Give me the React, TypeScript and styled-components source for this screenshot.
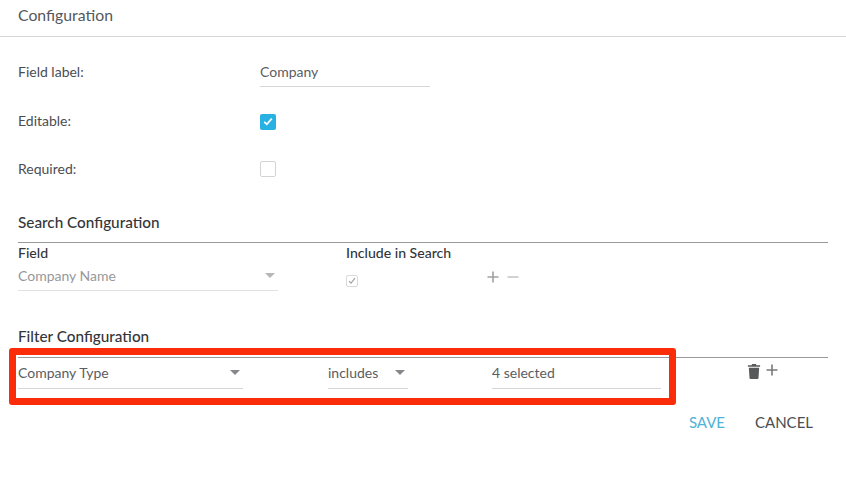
import React from "react";
import styled, { createGlobalStyle } from "styled-components";

const Global = createGlobalStyle`
  html, body { margin: 0; padding: 0; background: #fff; }
  body { font-family: Lato, "Open Sans", sans-serif; color: #4a4d52; }
`;

const Page = styled.div`
  position: relative;
  width: 846px;
  height: 494px;
  overflow: hidden;
  background: #fff;
`;

const Header = styled.header`
  height: 36px;
  border-bottom: 1px solid #d5d6d8;
  padding-left: 18px;
  font-size: 15.8px;
  color: #55585c;
  line-height: 30px;
`;

const Body = styled.div`
  padding: 0 18px;
`;

const FormRow = styled.div<{ $h: number }>`
  display: flex;
  align-items: center;
  height: ${(p) => p.$h}px;
  font-size: 14px;
`;

const FormLabel = styled.div`
  width: 242px;
  padding-bottom: 2px;
  color: #4a4d52;
`;

const TextValue = styled.div`
  width: 170px;
  height: 28px;
  box-sizing: border-box;
  border-bottom: 1px solid #d5d6d8;
  font-size: 14px;
  line-height: 25px;
  color: #5a5d61;
  margin-top: 1px;
`;

const Box = styled.span<{ $checked?: boolean }>`
  width: 16px;
  height: 16px;
  box-sizing: border-box;
  border-radius: 2px;
  display: inline-flex;
  align-items: center;
  justify-content: center;
  margin-top: ${(p) => (p.$checked ? 1 : 0)}px;
  background: ${(p) => (p.$checked ? "#29b1e3" : "#fff")};
  border: ${(p) => (p.$checked ? "none" : "1px solid #d3d4d6")};
`;

const SectionTitle = styled.h3<{ $top: number }>`
  margin: ${(p) => p.$top}px 0 0;
  height: 20px;
  font-size: 15.3px;
  line-height: 19px;
  font-weight: 500;
  color: #33363a;
`;

const Rule = styled.div<{ $top: number }>`
  height: 1px;
  margin-top: ${(p) => p.$top}px;
  background: #97999c;
`;

const SearchGrid = styled.div`
  display: grid;
  grid-template-columns: 328px 141px 1fr;
`;

const ColHead = styled.div`
  font-size: 14.1px;
  line-height: 20px;
  font-weight: 500;
  color: #33363a;
  height: 20px;
`;

const SelectField = styled.div<{ $w: number; $muted?: boolean; $gap?: number }>`
  width: ${(p) => p.$w}px;
  margin-left: ${(p) => p.$gap ?? 0}px;
  height: ${(p) => (p.$muted ? 28 : 29)}px;
  box-sizing: border-box;
  display: flex;
  align-items: center;
  justify-content: space-between;
  border-bottom: 1px solid ${(p) => (p.$muted ? "#e0e1e3" : "#d5d6d8")};
  font-size: 14px;
  color: ${(p) => (p.$muted ? "#96989b" : "#5a5d61")};
  padding: 0 3px ${(p) => (p.$muted ? 2 : 3)}px 0;
`;

const Caret = styled.span<{ $muted?: boolean }>`
  width: 0;
  height: 0;
  border-left: 5px solid transparent;
  border-right: 5px solid transparent;
  border-top: 5px solid ${(p) => (p.$muted ? "#b5b6b8" : "#85878a")};
`;

const SmallBox = styled.span`
  width: 12px;
  height: 12px;
  box-sizing: border-box;
  margin-top: 12px;
  border: 1px solid #d9dadb;
  border-radius: 2px;
  display: inline-flex;
  align-items: center;
  justify-content: center;
`;

const IconRow = styled.div`
  display: flex;
  align-items: center;
  gap: 8px;
  height: 14px;
  margin-top: 27px;
`;

const FilterRow = styled.div`
  display: flex;
  align-items: flex-start;
  height: 30px;
  padding-top: 2px;
`;

const FilterActions = styled.div`
  display: flex;
  align-items: flex-start;
  gap: 5px;
  margin-left: 86px;
  padding-top: 4px;
`;

const Footer = styled.div`
  display: flex;
  justify-content: flex-end;
  gap: 30px;
  padding-right: 15px;
  margin-top: 23px;
  font-size: 15px;
  line-height: 19px;
`;

const FooterButton = styled.button<{ $primary?: boolean }>`
  all: unset;
  color: ${(p) => (p.$primary ? "#4fb3d6" : "#4a4d52")};
`;

const Highlight = styled.div`
  position: absolute;
  left: 9px;
  top: 348px;
  width: 667px;
  height: 57px;
  box-sizing: border-box;
  border: 7px solid #fa2c0a;
  border-radius: 3px;
  pointer-events: none;
`;

const Plus = ({ c }: { c: string }) => (
  <svg width="12" height="12" viewBox="0 0 12 12">
    <path d="M6 .5v11M.5 6h11" stroke={c} strokeWidth="1.6" fill="none" />
  </svg>
);

const Minus = ({ c }: { c: string }) => (
  <svg width="12" height="12" viewBox="0 0 12 12">
    <path d="M.5 6h11" stroke={c} strokeWidth="1.6" fill="none" />
  </svg>
);

export default function App() {
  return (
    <Page>
      <Global />
      <Header>Configuration</Header>
      <Body>
        <FormRow $h={70}>
          <FormLabel>Field label:</FormLabel>
          <TextValue>Company</TextValue>
        </FormRow>
        <FormRow $h={28}>
          <FormLabel>Editable:</FormLabel>
          <Box $checked>
            <svg width="10" height="9" viewBox="0 0 10 9">
              <path d="M1.2 4.8 3.8 7.2 8.8 1.6" stroke="#fff" strokeWidth="1.7" fill="none" />
            </svg>
          </Box>
        </FormRow>
        <FormRow $h={68}>
          <FormLabel>Required:</FormLabel>
          <Box />
        </FormRow>
        <SectionTitle $top={10}>Search Configuration</SectionTitle>
        <Rule $top={9} />
        <SearchGrid>
          <div>
            <ColHead>Field</ColHead>
            <SelectField $w={260} $muted>
              Company Name
              <Caret $muted />
            </SelectField>
          </div>
          <div>
            <ColHead>Include in Search</ColHead>
            <SmallBox>
              <svg width="8" height="8" viewBox="0 0 8 8">
                <path d="M1 4.2 3 6.2 7 1.2" stroke="#a3a4a6" strokeWidth="1.2" fill="none" />
              </svg>
            </SmallBox>
          </div>
          <IconRow>
            <Plus c="#9fa1a3" />
            <Minus c="#c6c7c9" />
          </IconRow>
        </SearchGrid>
        <SectionTitle $top={36}>Filter Configuration</SectionTitle>
        <Rule $top={10} />
        <FilterRow>
          <SelectField $w={225}>
            Company Type
            <Caret />
          </SelectField>
          <SelectField $w={80} $gap={85}>
            includes
            <Caret />
          </SelectField>
          <SelectField $w={169} $gap={84}>
            4 selected
          </SelectField>
          <FilterActions>
            <svg width="14" height="15" viewBox="0 0 14 16">
              <path d="M5 0h4l.6 1.2H13.5v1.6H.5V1.2h3.9zM1.5 4h11l-.7 11a1 1 0 0 1-1 1H3.2a1 1 0 0 1-1-1z" fill="#58595b" />
            </svg>
            <Plus c="#77797b" />
          </FilterActions>
        </FilterRow>
        <Footer>
          <FooterButton $primary>SAVE</FooterButton>
          <FooterButton>CANCEL</FooterButton>
        </Footer>
      </Body>
      <Highlight />
    </Page>
  );
}
